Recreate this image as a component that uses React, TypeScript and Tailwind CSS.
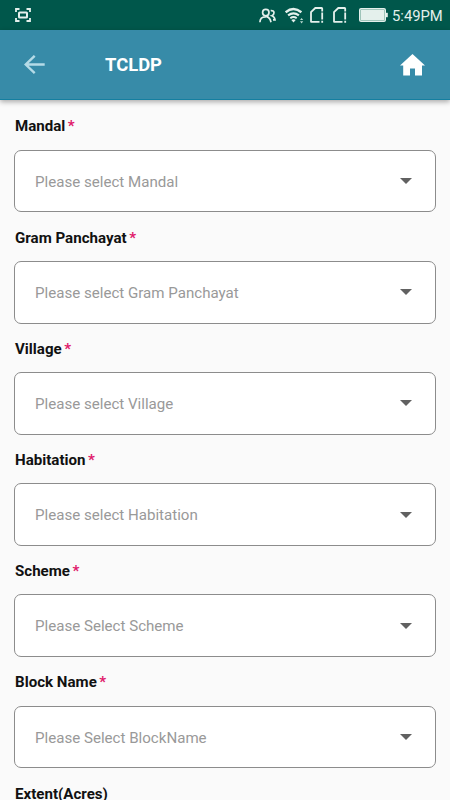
import React from "react";

const fields = [
  { label: "Mandal", placeholder: "Please select Mandal" },
  { label: "Gram Panchayat", placeholder: "Please select Gram Panchayat" },
  { label: "Village", placeholder: "Please select Village" },
  { label: "Habitation", placeholder: "Please select Habitation" },
  { label: "Scheme", placeholder: "Please Select Scheme" },
  { label: "Block Name", placeholder: "Please Select BlockName" },
];

function CaptureIcon() {
  return (
    <svg className="h-[14px] w-4" viewBox="0 0 16 14" fill="none" stroke="#e4f0ec" strokeWidth="1.8">
      <path d="M1 4V1h3.500M11.500 1H15v3M15 10v3h-3.500M4.500 13H1v-3" />
      <rect x="4" y="4.500" width="8" height="5" rx=".6" strokeWidth="2" />
    </svg>
  );
}

function PeopleIcon() {
  return (
    <svg className="h-[15px] w-[17px]" viewBox="0 0 17 15" fill="none" stroke="#e4f0ec" strokeWidth="1.7">
      <circle cx="6.8" cy="4.6" r="3.2" />
      <path d="M.9 14.200c.2-3.500 2.400-5.300 5.400-5.300 1.500-.1 2.300-.5 3-1.500M8 8.900c2 .4 3.300 2.200 4 5.300" />
      <path d="M11.700 2.700c2-.3 3.300.6 3.300 2.100 0 1.400-.8 2.400-2.100 2.900 1.700.5 2.800 1.900 3.100 4.200h-2" />
    </svg>
  );
}

function WifiIcon() {
  return (
    <svg className="h-[17px] w-[19px]" viewBox="0 0 19 17" fill="none" stroke="#e4f0ec">
      <path d="M.6 5.200Q8.500-1.200 16.400 5.200" strokeWidth="2.400" />
      <path d="M3.100 8.300q5.400-4 10.800 0" strokeWidth="2.200" />
      <path d="M5.300 11.200q3.200-2.400 6.400 0" strokeWidth="2" />
      <path d="M6.300 12.900q2.200-1.300 4.400 0L8.500 15.500z" fill="#e4f0ec" stroke="none" />
      <path d="M15 13.100l1.600-2.200 1.600 2.200zM15 14.300h3.200l-1.600 2.200z" fill="#b9d9d0" stroke="none" />
    </svg>
  );
}

function SimIcon() {
  return (
    <svg className="h-4 w-[14px]" viewBox="0 0 14 16" fill="none" stroke="#e4f0ec" strokeWidth="1.800">
      <path d="M9.500 14.900H1.500a.5.500 0 0 1-.5-.5V5.200L5.300 1h6.300a.6.600 0 0 1 .6.600v2.800" />
      <path d="M12.200 5.500v7M12.200 13.800v2" strokeWidth="1.800" />
    </svg>
  );
}

function StatusBar() {
  return (
    <div className="flex h-[30px] shrink-0 items-center justify-between bg-[#00574b] pr-[8px] pl-[15px]">
      <CaptureIcon />
      <div className="flex items-center">
        <PeopleIcon />
        <div className="ml-[9px]"><WifiIcon /></div>
        <div className="ml-[6px]"><SimIcon /></div>
        <div className="ml-[9px]"><SimIcon /></div>
        <svg className="ml-[12px] h-[14px] w-[29px]" viewBox="0 0 29 14">
          <rect x=".6" y=".6" width="25.800" height="12.800" rx="1.500" fill="#8db9ad" stroke="#e4f0ec" strokeWidth="1.200" />
          <rect x="2" y="2" width="23" height="10" fill="#e4f0ec" />
          <rect x="27" y="4.800" width="1.800" height="4.400" fill="#e4f0ec" />
        </svg>
        <span className="ml-[4px] w-[50px] pt-px text-[14.800px] leading-[20px] whitespace-nowrap text-[#e4f0ec]">5:49PM</span>
      </div>
    </div>
  );
}

function Header() {
  return (
    <header className="z-10 flex h-[70px] shrink-0 items-center border-b border-[#147fa0] bg-[#378ba8] pl-[24px] shadow-[0_2px_5px_rgba(0,0,0,0.32)]">
      <svg className="h-5 w-[21px]" viewBox="0 0 21 20" fill="none" stroke="#b5dbe7" strokeWidth="2.400">
        <path d="M20.700 9.500H2M10.700 .8 1.700 9.500l9 8.700" />
      </svg>
      <h1 className="ml-[60px] pt-px text-[18.400px] leading-6 font-bold text-white">TCLDP</h1>
      <svg className="mr-[25px] ml-auto h-[22px] w-[25px]" viewBox="0 0 25 22" fill="white">
        <path d="M12.500 0 0 11.500h3.200V21.500H10V14.500h5v7h7V11.500h3z" />
      </svg>
    </header>
  );
}

function SelectField({ label, placeholder }: { label: string; placeholder: string }) {
  return (
    <div className="h-[111.200px] shrink-0">
      <div className="flex h-[33.200px] items-start pl-[15px] text-[15.100px] leading-5 font-bold text-[#111]">
        {label}
        <span className="ml-[2.500px] text-[#e0196b]">*</span>
      </div>
      <button className="mx-[14px] flex h-[62.800px] w-[422px] items-center justify-between rounded-[7px] border border-[#8c8c8c] bg-white pr-[23px] pl-[20px] text-left">
        <span className="pt-[1.500px] text-[15.100px] leading-5 text-[#999]">{placeholder}</span>
        <svg className="h-[6px] w-3" viewBox="0 0 12 6" fill="#616161">
          <path d="M0 0h12L6 6z" />
        </svg>
      </button>
    </div>
  );
}

export default function App() {
  return (
    <div className="flex h-[800px] w-[450px] flex-col overflow-hidden bg-[#fafafa] font-[Roboto,sans-serif]">
      <StatusBar />
      <Header />
      <main className="flex min-h-0 flex-1 flex-col overflow-hidden pt-[16.400px]">
        {fields.map((field) => (
          <SelectField key={field.label} {...field} />
        ))}
        <div className="shrink-0 pl-[15px] text-[15.100px] leading-5 font-bold text-[#111]">Extent(Acres)</div>
      </main>
    </div>
  );
}
